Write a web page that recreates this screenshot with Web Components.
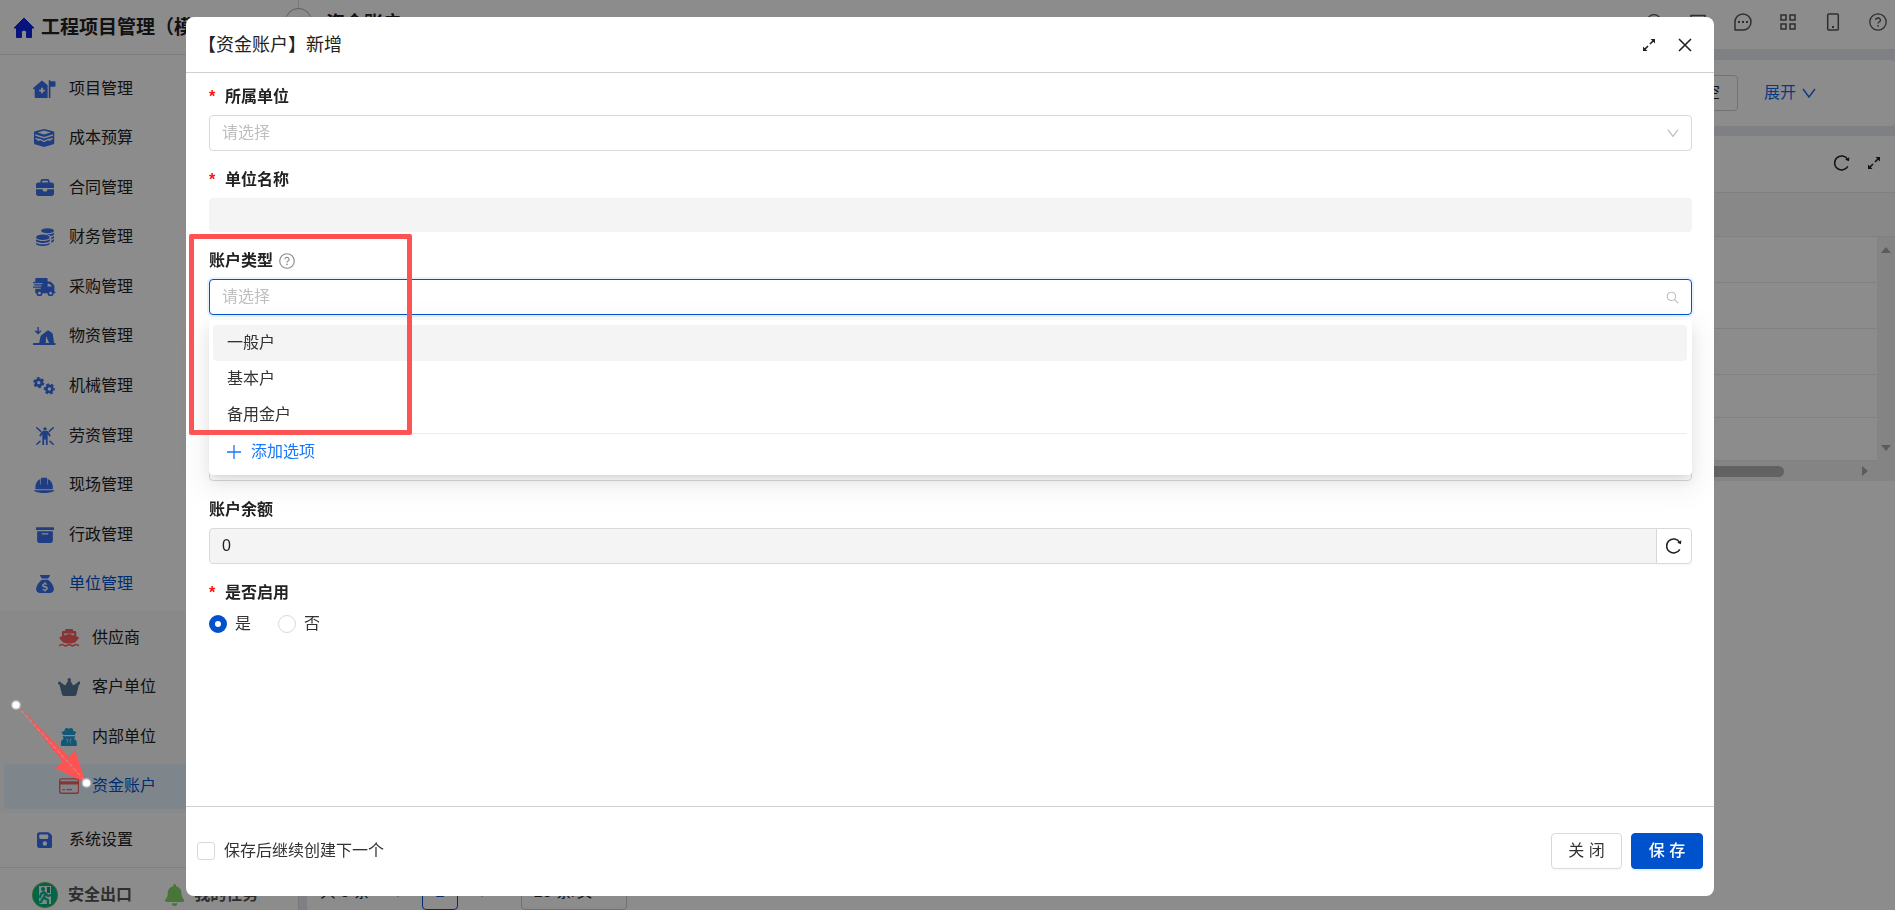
<!DOCTYPE html>
<html lang="zh-CN">
<head>
<meta charset="utf-8">
<meta name="viewport" content="width=device-width, initial-scale=1">
<title>资金账户</title>
<style>
  html, body {
    height: 100%;
    margin: 0;
  }
  body {
    font: 16px/24px "Liberation Sans", "Noto Sans CJK SC", sans-serif;
    color: #222;
    background: #fff;
    overflow: hidden;
  }
</style>
</head>
<body>
<app-layout></app-layout>
<modal-dialog heading="【资金账户】新增">
  <account-form></account-form>
</modal-dialog>
<guide-marks></guide-marks>

<script>
const ICONS = {
  home: ["0 0 20 20", `<path d="M10 0 20 10H17.500V19.500H12.500V14.500a2.500 2.500 0 0 0-5 0V19.500H2.500V10H0Z" stroke="currentColor" stroke-linejoin="round"/>`],
  clinic: ["0 0 640 512", `<path fill-rule="evenodd" d="M256 20c-8 0-14 3-20 8L12 220c-18 16-10 44 16 44h20v216c0 18 14 32 32 32h336V152L276 28c-6-5-12-8-20-8Zm-26 200h52v54h54v52h-54v54h-52v-54h-54v-52h54Z"/><path d="M448 24a24 24 0 0 1 48 0v8h112c18 0 32 12 32 28v100c0 16-12 32-32 32H496v320h-48Z"/>`],
  layers: ["0 0 576 512", `<path fill-rule="evenodd" d="M288 0 548 66c18 6 28 16 28 34v300c0 16-8 26-24 32L288 512 24 432C8 426 0 416 0 400V100c0-18 10-28 28-34Zm0 46L100 98l188 56 188-56ZM36 150v40l252 78 252-78v-40l-252 78Zm0 100v22l84 70 60-20 108 56 108-56 60 20 84-70v-22l-90 30-50-4-112 60-112-60-50 4Z"/>`],
  briefcase: ["0 0 512 512", `<path d="M184 48H328c4.400 0 8 3.600 8 8V96H176V56c0-4.400 3.600-8 8-8zm-56 8V96H64C28.700 96 0 124.700 0 160v96H192 320 512V160c0-35.300-28.700-64-64-64H384V56c0-30.900-25.100-56-56-56H184c-30.900 0-56 25.100-56 56zM512 288H320v32c0 17.700-14.300 32-32 32H224c-17.700 0-32-14.300-32-32V288H0V416c0 35.300 28.700 64 64 64H448c35.300 0 64-28.700 64-64V288z"/>`],
  coins: ["0 0 512 512", `<ellipse cx="328" cy="76" rx="184" ry="72"/><path d="M512 128v44c0 28-36 52-88 64-20-34-80-60-150-68 110 18 208-6 238-40ZM512 222v42c0 28-30 50-80 62v-56c34-8 64-26 80-48ZM512 314v40c0 28-30 50-80 62v-56c34-8 64-24 80-46Z"/><ellipse cx="196" cy="264" rx="196" ry="78"/><path d="M0 322c74 66 318 66 392 0v42c0 36-88 62-196 62S0 400 0 364ZM0 416c74 60 318 60 392 0v34c0 36-88 62-196 62S0 486 0 450Z"/>`],
  truck: ["0 0 640 512", `<path fill-rule="evenodd" d="M64 32c0-18 14-32 32-32h288c18 0 32 14 32 32v64h56c16 0 30 6 42 18l76 76c12 12 18 26 18 42v152h8c12 0 24 8 24 20s-12 28-24 28h-28a88 88 0 1 1-176 0H272A88 88 0 1 1 96 432H64V304H224v-24H0v-36h240v-28H32v-36h240v-28H0v-36h64Zm352 128v80h128l-80-80ZM184 392a40 40 0 1 0 0 80 40 40 0 1 0 0-80Zm316 0a40 40 0 1 0 0 80 40 40 0 1 0 0-80Z"/>`],
  tent: ["0 0 640 512", `<path d="M124 0h42v132l44-42 30 30L145 214 50 120l30-30 44 42Z"/><path fill-rule="evenodd" d="M404 104c14-8 34-8 48 0l82 56c16 10 24 22 28 38l36 258h22a26 28 0 0 1 0 56H22a26 28 0 0 1 0-56h154c12-60 24-130 36-180 4-16 12-28 26-38Zm-30 152-12 200h100c-28-60-56-120-88-200Z"/>`],
  gears: ["0 0 640 512", `<g fill="none" stroke="currentColor"><circle cx="164" cy="160" r="86" stroke-width="76"/><circle cx="164" cy="160" r="134" stroke-width="52" stroke-dasharray="76 64.300"/><circle cx="466" cy="340" r="86" stroke-width="76"/><circle cx="466" cy="340" r="134" stroke-width="52" stroke-dasharray="76 64.300" stroke-dashoffset="36"/></g>`],
  worker: ["0 0 512 512", `<circle cx="256" cy="54" r="48"/><path d="M210 116h92c28 0 50 12 64 36l56 100-42 26-48-80v314h-50V352h-52v160h-50V198l-48 80-42-26 56-100c14-24 36-36 64-36Z"/><path d="M22 22 128 118M490 22 384 118M22 490 112 408M490 490 400 408" stroke="currentColor" stroke-width="44" stroke-linecap="round"/>`],
  helmet: ["0 0 576 512", `<path d="M216 48h144c10 0 16 8 16 18v176h18V88c92 42 142 126 142 226v60H40v-60C40 214 90 130 182 88v154h18V66c0-10 6-18 16-18Z"/><path d="M8 404h560c10 0 12 12 2 20-150 76-414 76-564 0-10-8-8-20 2-20Z"/>`],
  archive: ["0 0 512 512", `<path fill-rule="evenodd" d="M20 32H492c12 0 20 8 20 20V96c0 12-8 20-20 20H20C8 116 0 108 0 96V52C0 40 8 32 20 32zM32 148H480V416c0 35-29 64-64 64H96c-35 0-64-29-64-64V148zm128 76c0 10 7 18 16 18H336c9 0 16-8 16-18s-7-18-16-18H176c-9 0-16 8-16 18z"/>`],
  moneybag: ["0 0 512 512", `<path d="M132 0h248c14 0 22 16 14 28l-52 74H170l-52-74C110 16 118 0 132 0Z"/><path fill-rule="evenodd" d="M170 134h172c80 60 160 150 168 260 2 74-44 118-94 118H96C46 512 0 468 2 394c8-110 88-200 168-260Zm66 72v30c-36 6-60 26-60 60 0 40 40 52 72 62 30 8 44 14 44 28 0 28-56 22-98 2l-14 36c18 8 36 14 56 18v28h38v-28c38-6 62-28 62-62 0-40-36-54-68-64-30-8-48-14-48-28 0-24 40-20 82-4l10-38c-12-4-24-8-38-10v-30Z"/>`],
  floppy: ["0 0 448 512", `<path fill-rule="evenodd" d="M64 32C28.700 32 0 60.700 0 96V416c0 35.300 28.700 64 64 64H384c35.300 0 64-28.700 64-64V173.300c0-17-6.700-33.300-18.700-45.300L352 50.700C340 38.700 323.700 32 306.700 32H64zm0 96c0-17.700 14.300-32 32-32H288c17.700 0 32 14.300 32 32v64c0 17.700-14.300 32-32 32H96c-17.700 0-32-14.300-32-32V128zM224 288a64 64 0 1 1 0 128 64 64 0 1 1 0-128z"/>`],
  ship: ["0 0 576 512", `<path fill-rule="evenodd" d="M200 0h176c14 0 24 10 24 24v36h56c20 0 36 14 36 36v110l54 20c22 8 26 28 12 46l-92 106c-60 26-100 34-178 34S160 406 110 378L18 272C4 254 8 234 30 226l54-20V96c0-22 16-36 36-36h56V24c0-14 10-24 24-24Zm-52 128v56l140-48 140 48v-56Z"/><path d="M0 468c50 0 60-28 96-28s56 40 96 40 56-40 96-40 56 40 96 40 56-40 96-40 46 28 96 28" fill="none" stroke="currentColor" stroke-width="44"/>`],
  crown: ["0 0 640 512", `<circle cx="320" cy="50" r="50"/><circle cx="44" cy="142" r="44"/><circle cx="596" cy="142" r="44"/><path d="m66 118 116 84c14 10 30 8 38-8l64-110h72l64 110c8 16 24 18 38 8l116-84 30 46-76 300c-6 30-26 48-56 48H168c-30 0-50-18-56-48L36 164Z"/>`],
  spy: ["0 0 448 512", `<path d="M156 0c22 0 44 18 68 18S270 0 292 0c36 0 56 52 66 94 50 10 78 20 78 34 0 10-14 18-36 26l-4 46H52l-4-46C26 146 12 138 12 128c0-14 28-24 78-34C100 52 120 0 156 0Z"/><path fill-rule="evenodd" d="M40 232h368l-36 76c44 22 76 64 76 120v84H0v-84c0-56 32-98 76-120Zm88 56 60 68-34 126 52-120-20-40Zm192 0-58 34-20 40 52 120-34-126Z"/>`],
  card: ["0 0 576 512", `<path fill-rule="evenodd" d="M64 32h448c36 0 64 28 64 64v320c0 36-28 64-64 64H64c-36 0-64-28-64-64V96c0-36 28-64 64-64Zm0 40c-14 0-24 10-24 24v24h496V96c0-14-10-24-24-24ZM40 216v200c0 14 10 24 24 24h448c14 0 24-10 24-24V216Zm56 124h72v36H96Zm112 0h164v36H208Z"/>`],
  bell: ["0 0 448 512", `<path d="M224 0c-18 0-32 14-32 32v20C120 66 64 130 64 208v19c0 47-17 92-48 128l-8 8c-8 10-10 23-5 35 6 11 17 18 29 18h384c12 0 23-7 29-18 5-12 3-25-5-35l-8-8c-31-36-48-81-48-128v-19c0-78-56-142-128-156V32c0-18-14-32-32-32ZM160 448a64 64 0 0 0 128 0Z"/>`],
  exit: ["0 0 26 26", `<circle cx="13" cy="13" r="13" fill="#6dbb50"/><circle cx="13" cy="13" r="12" fill="#00b887"/><path d="M7 4h12v18H7Z" fill="#edf5f0"/><circle cx="11" cy="7" r="2" fill="#00b887"/><path d="m12 10-3 2-1 3m5-4 3 3 3-1m-6-1-1 4 4 2v4m-5-6-2 4-4 1" fill="none" stroke="#00b887" stroke-width="2.200" stroke-linecap="round" stroke-linejoin="round"/><path d="M15 5h3v6h-3Z" fill="#00a078"/>`],
  message: ["0 0 18 18", `<path d="M1 17V9a8 8 0 1 1 8 8Z" fill="none" stroke="currentColor" stroke-width="1.500" stroke-linejoin="round"/><path d="M4 8h2v2H4ZM8 8h2v2H8ZM12 8h2v2h-2Z"/>`],
  apps: ["0 0 18 18", `<path d="M2 2h5v5H2ZM11 2h5v5h-5ZM2 11h5v5H2ZM11 11h5v5h-5Z" fill="none" stroke="currentColor" stroke-width="1.500"/>`],
  mobile: ["0 0 18 18", `<rect x="3.700" y="1" width="10.600" height="16" rx="1" fill="none" stroke="currentColor" stroke-width="1.500"/><path d="M8 13h2v2H8Z"/>`],
  help: ["0 0 18 18", `<g fill="none" stroke="currentColor" stroke-width="1.300"><circle cx="9" cy="9" r="8.200"/><path d="M6.600 7a2.400 2.100 0 1 1 3.400 2Q9 9.500 9 10.600"/></g><circle cx="9" cy="12.800" r=".9"/>`],
  find: ["0 0 18 18", `<circle cx="9" cy="9" r="8.200" fill="none" stroke="currentColor" stroke-width="1.400"/>`],
  screen: ["0 0 18 18", `<rect x="2" y="2.500" width="14" height="11" fill="none" stroke="currentColor" stroke-width="1.500"/>`],
  down: ["0 0 14 14", `<path d="m1 3 6 8 6-8" fill="none" stroke="currentColor" stroke-width="1.400"/>`],
  prev: ["0 0 14 14", `<path d="M10 1 4 7l6 6" fill="none" stroke="currentColor"/>`],
  next: ["0 0 14 14", `<path d="m4 1 6 6-6 6" fill="none" stroke="currentColor"/>`],
  collapse: ["0 0 14 14", `<path d="M7 1 2 7l5 6M12 1 7 7l5 6" fill="none" stroke="currentColor"/>`],
  search: ["0 0 14 14", `<path d="m9 9 4 4" stroke="currentColor" stroke-width="1.300"/><circle cx="5.800" cy="5.800" r="4.500" fill="none" stroke="currentColor" stroke-width="1.200"/>`],
  plus: ["0 0 14 14", `<path d="M7 0v14M0 7h14" stroke="currentColor" stroke-width="1.300"/>`],
  close: ["0 0 14 14", `<path d="m1 1 12 12M13 1 1 13" stroke="currentColor" stroke-width="1.600"/>`],
  expand: ["0 0 14 14", `<path d="M8.500 1H13v4.500ZM1 8.500V13h4.500Z"/><path d="m8 6 3.500-3.500M6 8l-3.500 3.500" stroke="currentColor" stroke-width="1.600"/>`],
  reload: ["0 0 16 16", `<path d="M13.800 11.300A7 7 0 1 1 13.700 4.500" fill="none" stroke="currentColor" stroke-width="1.500"/><path d="m15.300 2.200-.3 4-3.800-1.400Z"/>`],
  up: ["0 0 10 6", `<path d="m5 0 5 6H0Z"/>`],
  low: ["0 0 10 6", `<path d="m5 6 5-6H0Z"/>`],
  right: ["0 0 6 10", `<path d="m6 5-6 5V0Z"/>`]
};

// icon(name, height): the width follows the view box
function icon(name, size) {
  const [box, shapes] = ICONS[name];
  return `<svg viewBox="${box}" height="${size}" fill="currentColor" aria-hidden="true" style="display:block">${shapes}</svg>`;
}

const BUTTON_RESET = `
  * { box-sizing: border-box; }
  button, input, select { font: inherit; color: inherit; margin: 0; }
  button { background: none; border: none; padding: 0; display: flex; align-items: center; justify-content: center; }
`;

class NavItem extends HTMLElement {
  constructor() {
    super();
    this.attachShadow({ mode: "open" });
    this.shadowRoot.innerHTML = `
      <style>
        :host { display: flex; align-items: center; padding: 2px 4px; box-sizing: border-box; min-height: 0; }
        a {
          flex: 1;
          display: flex;
          align-items: center;
          height: 45px;
          padding-left: 24px;
          border-radius: 4px;
          color: inherit;
          text-decoration: none;
        }
        .icon { width: 33px; margin-right: 8px; display: flex; justify-content: center; color: var(--icon, #3a70ee); }
        :host([child]) a { padding-left: 48px; }
        :host([child]) .icon { width: 34px; margin-right: 6px; }
        :host([open]) a { color: #0052cc; }
        :host([active]) a { color: #0052cc; background: #e6f4ff; }
      </style>
      <a href="#"><span class="icon">${icon(this.getAttribute("icon"), 18)}</span><slot></slot></a>
    `;
  }
}
customElements.define("nav-item", NavItem);

class AppSidebar extends HTMLElement {
  constructor() {
    super();
    this.attachShadow({ mode: "open" });
    this.shadowRoot.innerHTML = `
      <style>
        :host { display: flex; flex-direction: column; background: #fff; border-right: 1px solid #ddd; min-height: 0; }
        header {
          flex: none;
          display: flex;
          align-items: center;
          gap: 7px;
          height: 55px;
          padding: 2px 14px 0;
          box-sizing: border-box;
          border-bottom: 1px solid #e8e8e8;
          font-size: 19px;
          font-weight: 600;
          white-space: nowrap;
          overflow: hidden;
        }
        header span { color: #1024e6; }
        nav { flex: 1; padding-top: 9px; min-height: 0; }
        .group { display: grid; grid-template-rows: repeat(11, 1fr); height: 545px; }
        .sub { display: grid; grid-template-rows: repeat(4, 1fr); height: 202px; padding: 2px 0; margin: 2px 0; box-sizing: border-box; background: #f9f9f9; }
        footer {
          display: flex;
          align-items: center;
          height: 43px;
          padding: 12px 32px 0;
          box-sizing: border-box;
          border-top: 1px solid #e8e8e8;
          font-weight: 600;
          color: #555;
        }
        footer a { display: flex; align-items: center; gap: 10px; color: inherit; text-decoration: none; white-space: nowrap; }
        footer a + a { margin-left: 33px; }
        .bell { color: #84d566; }
      </style>
      <header><span>${icon("home", 20)}</span>工程项目管理（模板）</header>
      <nav>
        <div class="group">
          <nav-item icon="clinic">项目管理</nav-item>
          <nav-item icon="layers">成本预算</nav-item>
          <nav-item icon="briefcase">合同管理</nav-item>
          <nav-item icon="coins">财务管理</nav-item>
          <nav-item icon="truck">采购管理</nav-item>
          <nav-item icon="tent">物资管理</nav-item>
          <nav-item icon="gears">机械管理</nav-item>
          <nav-item icon="worker">劳资管理</nav-item>
          <nav-item icon="helmet">现场管理</nav-item>
          <nav-item icon="archive">行政管理</nav-item>
          <nav-item icon="moneybag" open>单位管理</nav-item>
        </div>
        <div class="sub">
          <nav-item child icon="ship" style="--icon: #f8605f">供应商</nav-item>
          <nav-item child icon="crown" style="--icon: #557596">客户单位</nav-item>
          <nav-item child icon="spy" style="--icon: #1f9ed8">内部单位</nav-item>
          <nav-item child active icon="card" style="--icon: #f8605f">资金账户</nav-item>
        </div>
        <nav-item icon="floppy">系统设置</nav-item>
      </nav>
      <footer>
        <a href="#">${icon("exit", 26)}安全出口</a>
        <a href="#"><span class="bell">${icon("bell", 22)}</span>我的任务</a>
      </footer>
    `;
  }
}
customElements.define("app-sidebar", AppSidebar);

class PageHeader extends HTMLElement {
  constructor() {
    super();
    this.attachShadow({ mode: "open" });
    this.shadowRoot.innerHTML = `
      <style>
        ${BUTTON_RESET}
        :host { position: relative; display: flex; align-items: center; height: 49px; padding: 0 8px 5px 27px; box-sizing: border-box; background: #fff; }
        h1 { flex: 1; margin: 0; padding-top: 4px; font-size: 19px; font-weight: 600; line-height: 24px; }
        .tools { display: flex; gap: 27px; color: #555; }
        .fold {
          position: absolute;
          left: -14px;
          top: 8px;
          width: 27px;
          height: 27px;
          border: 1px solid #aaa;
          border-radius: 50%;
          background: #fff;
          color: #666;
        }
      </style>
      <button class="fold" aria-label="收起">${icon("collapse", 12)}</button>
      <h1>资金账户</h1>
      <div class="tools">
        <button aria-label="搜索">${icon("find", 16)}</button>
        <button aria-label="桌面">${icon("screen", 18)}</button>
        <button aria-label="消息">${icon("message", 18)}</button>
        <button aria-label="应用">${icon("apps", 18)}</button>
        <button aria-label="手机">${icon("mobile", 18)}</button>
        <button aria-label="帮助">${icon("help", 18)}</button>
      </div>
    `;
  }
}
customElements.define("page-header", PageHeader);

class FilterBar extends HTMLElement {
  constructor() {
    super();
    this.attachShadow({ mode: "open" });
    this.shadowRoot.innerHTML = `
      <style>
        ${BUTTON_RESET}
        :host { display: flex; align-items: center; justify-content: flex-end; gap: 26px; height: 66px; padding-right: 79px; box-sizing: border-box; background: #fff; border-radius: 4px; }
        .clear { height: 36px; padding: 0 17px; border: 1px solid #d0d0d0; border-radius: 4px; }
        .more { gap: 6px; color: #1668f0; }
      </style>
      <button class="clear">清 空</button>
      <button class="more">展开${icon("down", 14)}</button>
    `;
  }
}
customElements.define("filter-bar", FilterBar);

class AccountTable extends HTMLElement {
  constructor() {
    super();
    this.attachShadow({ mode: "open" });
    const row = `<tr><td></td><td></td><td></td></tr>`;
    this.shadowRoot.innerHTML = `
      <style>
        ${BUTTON_RESET}
        :host { flex: 1; display: flex; flex-direction: column; min-height: 0; background: #fff; }
        .bar { display: flex; justify-content: flex-end; align-items: center; gap: 17px; height: 56px; padding: 0 14px 2px 0; box-sizing: border-box; }
        .grid { display: grid; grid-template-columns: 1fr 18px; background: #f1f1f1; }
        table { width: 100%; border-collapse: separate; border-spacing: 0; background: #fff; }
        .head { grid-column: 1 / 3; background: #f8f8f8; }
        th { height: 45px; padding: 0; border: solid #eaeaea; border-width: 1px 0; }
        td { height: 46px; padding: 0; border-bottom: 1px solid #eaeaea; }
        tr:nth-child(n + 4) td { height: 43px; }
        .scroll { display: flex; color: #a8a8a8; }
        .vertical { flex-direction: column; justify-content: space-between; align-items: center; padding: 10px 0; }
        .horizontal { grid-column: 1 / 3; align-items: center; height: 20px; padding-right: 27px; }
        .track { flex: 1; }
        .thumb { width: 95%; height: 11px; border-radius: 6px; background: #b2b2b2; }
        .pages { display: flex; align-items: center; gap: 8px; margin-top: auto; padding-left: 13px; }
        .pages button { width: 36px; height: 36px; border-radius: 4px; color: #888; }
        .pages .current { border: 1px solid #0052cc; color: #0052cc; font-weight: 600; }
        .pages select { appearance: none; width: 106px; height: 36px; margin-left: 11px; padding: 0 12px; border: 1px solid #ccc; border-radius: 4px; background: #fff; }
      </style>
      <div class="bar">
        <button aria-label="刷新">${icon("reload", 16)}</button>
        <button aria-label="全屏">${icon("expand", 14)}</button>
      </div>
      <div class="grid">
        <table class="head"><thead><tr><th></th><th></th><th></th></tr></thead></table>
        <table><tbody>${row.repeat(5)}</tbody></table>
        <div class="scroll vertical">${icon("up", 6)}${icon("low", 6)}</div>
        <div class="scroll horizontal"><div class="track"><div class="thumb"></div></div>${icon("right", 10)}</div>
      </div>
      <div class="pages">
        <span>共 5 条</span>
        <button aria-label="上一页">${icon("prev", 12)}</button>
        <button class="current">1</button>
        <button aria-label="下一页">${icon("next", 12)}</button>
        <select aria-label="每页条数"><option>20 条/页</option></select>
      </div>
    `;
  }
}
customElements.define("account-table", AccountTable);

class AppLayout extends HTMLElement {
  constructor() {
    super();
    this.attachShadow({ mode: "open" });
    this.shadowRoot.innerHTML = `
      <style>
        :host { display: grid; grid-template-columns: 299px 1fr; height: 100vh; }
        main { display: flex; flex-direction: column; min-width: 0; min-height: 0; background: #e5eaf0; }
        .content { flex: 1; display: flex; flex-direction: column; gap: 10px; padding: 11px 0 0 8px; min-height: 0; }
      </style>
      <app-sidebar></app-sidebar>
      <main>
        <page-header></page-header>
        <div class="content">
          <filter-bar></filter-bar>
          <account-table></account-table>
        </div>
      </main>
    `;
  }
}
customElements.define("app-layout", AppLayout);

class FormField extends HTMLElement {
  constructor() {
    super();
    this.attachShadow({ mode: "open" });
    const label = this.getAttribute("label") || "";
    const required = this.hasAttribute("required") ? `<i>*</i>` : "";
    const help = this.hasAttribute("help") ? `<button class="help" type="button" aria-label="说明">${icon("help", 16)}</button>` : "";
    this.shadowRoot.innerHTML = `
      <style>
        ${BUTTON_RESET}
        :host { display: block; }
        .top { display: flex; align-items: center; height: 24px; margin-bottom: 6px; color: #222; }
        label { font-weight: 600; }
        i { display: inline-block; width: 16px; font-style: normal; color: #ff1010; }
        .help { margin-left: 6px; color: #8c8c8c; }
        .box { position: relative; display: flex; align-items: center; }
        input, select {
          appearance: none;
          flex: 1;
          min-width: 0;
          height: 36px;
          padding: 0 12px;
          border: 1px solid #d9d9d9;
          border-radius: 4px;
          background: #fff;
          outline: none;
        }
        select, input::placeholder { color: #bfbfbf; opacity: 1; }
        .plain { height: 34px; border: none; background: #f4f4f4; }
        .search { border-color: #0052cc; box-shadow: 0 0 0 2px rgba(5, 145, 255, 0.1); }
        .readonly { background: #f4f4f4; border-radius: 4px 0 0 4px; }
        .reload { width: 36px; height: 36px; margin-left: -1px; border: 1px solid #d9d9d9; border-radius: 0 4px 4px 0; color: #222; background: #fff; box-shadow: 0 2px 0 rgba(0, 0, 0, 0.02); }
        .suffix { position: absolute; right: 13px; color: #bfbfbf; }
      </style>
      <div class="top"><label for="control">${required}${label}</label>${help}</div>
      <div class="box">${this.control()}<slot></slot></div>
    `;
  }

  control() {
    const placeholder = this.getAttribute("placeholder") || "";
    switch (this.getAttribute("type")) {
      case "select":
        return `<select id="control"><option>${placeholder}</option></select><span class="suffix">${icon("down", 12)}</span>`;
      case "search":
        return `<input id="control" class="search" role="combobox" aria-expanded="true" placeholder="${placeholder}"><span class="suffix">${icon("search", 13)}</span>`;
      case "plain":
        return `<input id="control" class="plain" disabled>`;
      case "readonly":
        return `<input id="control" class="readonly" readonly value="${this.getAttribute("value")}"><button class="reload" type="button" aria-label="刷新">${icon("reload", 16)}</button>`;
      default:
        return `<input id="control">`;
    }
  }
}
customElements.define("form-field", FormField);

class OptionList extends HTMLElement {
  constructor() {
    super();
    this.attachShadow({ mode: "open" });
    this.shadowRoot.innerHTML = `
      <style>
        ${BUTTON_RESET}
        :host {
          position: absolute;
          z-index: 2;
          top: 41px;
          left: 0;
          right: 0;
          padding: 5px 5px 5px 4px;
          box-sizing: border-box;
          border-radius: 4px;
          background: #fff;
          color: #333;
          box-shadow: 0 6px 16px 0 rgba(0, 0, 0, 0.08), 0 3px 6px -4px rgba(0, 0, 0, 0.12), 0 9px 28px 8px rgba(0, 0, 0, 0.05);
        }
        ul { margin: 0; padding: 0; list-style: none; }
        li { height: 36px; padding: 0 14px; line-height: 36px; border-radius: 4px; }
        li:first-child { background: #f4f4f4; }
        .add { width: 100%; height: 37px; justify-content: flex-start; gap: 10px; padding-left: 14px; border-top: 1px solid #ececec; color: #1677ff; }
      </style>
      <ul role="listbox">
        <li role="option" aria-selected="true">一般户</li>
        <li role="option">基本户</li>
        <li role="option">备用金户</li>
      </ul>
      <button class="add" type="button">${icon("plus", 14)}添加选项</button>
    `;
  }
}
customElements.define("option-list", OptionList);

class AccountForm extends HTMLElement {
  constructor() {
    super();
    this.attachShadow({ mode: "open" });
    this.shadowRoot.innerHTML = `
      <style>
        :host { display: block; }
        form { display: flex; flex-direction: column; gap: 17px; }
        fieldset { margin: 0; padding: 0; border: none; min-width: 0; }
        legend { padding: 0; margin-bottom: 7px; font-weight: 600; color: #222; }
        legend i { display: inline-block; width: 16px; font-style: normal; color: #ff1010; }
        .radios { display: flex; gap: 27px; }
        .radios label { display: flex; align-items: center; gap: 8px; color: #333; }
        input {
          appearance: none;
          width: 18px;
          height: 18px;
          margin: 0;
          box-sizing: border-box;
          border: 1px solid #d9d9d9;
          border-radius: 50%;
          background: #fff;
        }
        input:checked { border: 6px solid #0052cc; }
      </style>
      <form>
        <form-field label="所属单位" required type="select" placeholder="请选择"></form-field>
        <form-field label="单位名称" required type="plain"></form-field>
        <form-field label="账户类型" help type="search" placeholder="请选择"><option-list></option-list></form-field>
        <form-field></form-field>
        <form-field></form-field>
        <form-field label="账户余额" type="readonly" value="0"></form-field>
        <fieldset>
          <legend><i>*</i>是否启用</legend>
          <div class="radios">
            <label><input type="radio" name="enabled" checked>是</label>
            <label><input type="radio" name="enabled">否</label>
          </div>
        </fieldset>
      </form>
    `;
  }
}
customElements.define("account-form", AccountForm);

class ModalDialog extends HTMLElement {
  constructor() {
    super();
    this.attachShadow({ mode: "open" });
    this.shadowRoot.innerHTML = `
      <style>
        ${BUTTON_RESET}
        :host {
          position: fixed;
          inset: 0;
          display: flex;
          padding: 17px 181px 14px 186px;
          box-sizing: border-box;
          background: rgba(0, 0, 0, 0.45);
        }
        section { flex: 1; min-width: 0; display: flex; flex-direction: column; border-radius: 8px; background: #fff; }
        header { display: flex; align-items: center; height: 56px; padding: 0 22px 0 12px; border-bottom: 1px solid #d0d0d0; }
        h2 { flex: 1; margin: 0; font-size: 18px; font-weight: 400; line-height: 26px; }
        header button + button { margin-left: 22px; }
        .body { flex: 1; min-height: 0; padding: 12px 22px 0 23px; }
        footer { display: flex; align-items: center; gap: 9px; height: 90px; padding: 0 11px 2px; border-top: 1px solid #d0d0d0; }
        label { display: flex; align-items: center; gap: 9px; margin-right: auto; color: #333; }
        input { appearance: none; width: 18px; height: 18px; border: 1px solid #d9d9d9; border-radius: 3px; background: #fff; }
        footer button { width: 71px; height: 36px; border: 1px solid #d9d9d9; border-radius: 4px; color: #333; box-shadow: 0 2px 0 rgba(0, 0, 0, 0.02); }
        footer .primary { width: 72px; border-color: #0052cc; background: #0052cc; color: #fff; font-weight: 500; box-shadow: 0 2px 0 rgba(5, 145, 255, 0.1); }
      </style>
      <section role="dialog" aria-modal="true">
        <header>
          <h2>${this.getAttribute("heading")}</h2>
          <button aria-label="全屏">${icon("expand", 14)}</button>
          <button aria-label="关闭">${icon("close", 14)}</button>
        </header>
        <div class="body"><slot></slot></div>
        <footer>
          <label><input type="checkbox">保存后继续创建下一个</label>
          <button>关 闭</button>
          <button class="primary">保 存</button>
        </footer>
      </section>
    `;
  }
}
customElements.define("modal-dialog", ModalDialog);

// red frame and arrow drawn over the whole page
class GuideMarks extends HTMLElement {
  constructor() {
    super();
    this.attachShadow({ mode: "open" });
    this.shadowRoot.innerHTML = `
      <style>
        :host { position: fixed; inset: 0; pointer-events: none; }
        .frame { position: absolute; left: 189px; top: 234px; width: 223px; height: 201px; box-sizing: border-box; border: 5px solid #fd5353; border-radius: 2px; }
        svg { position: absolute; left: 0; top: 690px; }
      </style>
      <div class="frame"></div>
      <svg width="110" height="110" viewBox="0 690 110 110">
        <path d="M19 707 69 757 75 750 86 783 55 768 63 762Z" fill="#fd5353"/>
        <path d="M17 706 86 782" stroke="#aaa" stroke-dasharray="4 2"/>
        <g fill="#fff"><circle cx="16" cy="705" r="5" opacity=".4"/><circle cx="86.500" cy="783" r="5" opacity=".4"/><circle cx="16" cy="705" r="3.600"/><circle cx="86.500" cy="783" r="3.600"/></g>
      </svg>
    `;
  }
}
customElements.define("guide-marks", GuideMarks);
</script>
</body>
</html>
